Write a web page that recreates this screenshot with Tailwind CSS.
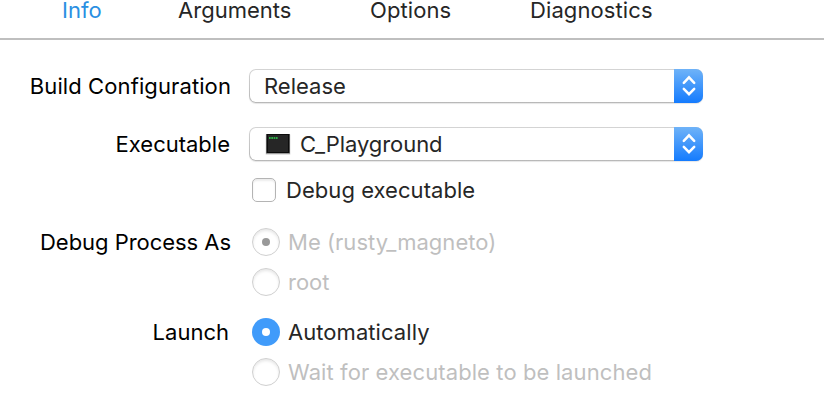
<!DOCTYPE html>
<html lang="en">
<head>
<meta charset="utf-8">
<title>Scheme</title>
<script src="https://cdn.jsdelivr.net/npm/@tailwindcss/browser@4"></script>
</head>
<body class="h-[416px] w-[824px] overflow-hidden bg-white font-['Inter','Liberation_Sans',sans-serif] text-[22px] leading-[20px] whitespace-nowrap text-[#262626]">
<nav class="flex h-10 border-b-2 border-[#bfbfbf] pl-[62px]">
  <a class="w-[116px] text-[#2a8fe2]">Info</a>
  <a class="w-[192px] tracking-[0.02px]">Arguments</a>
  <a class="w-[160px] tracking-[0.1px]">Options</a>
  <a class="tracking-[0.1px]">Diagnostics</a>
</nav>
<main class="grid grid-cols-[231px_1fr] gap-x-[18px] pt-[29px]">
  <div class="flex h-[34px] items-center justify-end text-black"><span class="tracking-[0.1px]">Build Configuration</span></div>
  <div class="flex h-[34px] w-[454px] overflow-hidden rounded-[7px] bg-[linear-gradient(#d4d4d4,#b8b8b8)] p-px shadow-[0_1px_1px_#0000001a]">
    <div class="flex flex-1 items-center rounded-l-[6px] bg-white pl-[14px]"><span>Release</span></div>
    <div class="-my-px -mr-px flex w-[29px] items-center justify-center bg-[linear-gradient(#6fb3f8,#147bfe)]">
      <svg class="h-[22px] w-[14px]" viewBox="0 0 14 22" fill="none" stroke="white" stroke-width="2.5" stroke-linecap="round"><path d="M1.8 7.8 7 2.4 12.2 7.8M1.8 13.8 7 19.2 12.2 13.8"/></svg>
    </div>
  </div>
  <div class="mt-6 flex h-[34px] items-center justify-end pr-px text-black"><span>Executable</span></div>
  <div class="mt-6 flex h-[34px] w-[454px] overflow-hidden rounded-[7px] bg-[linear-gradient(#d4d4d4,#b8b8b8)] p-px shadow-[0_1px_1px_#0000001a]">
    <div class="flex flex-1 items-center rounded-l-[6px] bg-white pl-[15px]">
      <svg class="mr-[9px] h-[22px] w-[26px]" viewBox="0 0 26 22"><rect x="0.5" y="1" width="25" height="21" rx="1" fill="#e2e2e2"/><rect x="1" y="1" width="24" height="20" fill="#9a9a9a"/><rect x="1.5" y="1" width="23" height="19" fill="#0c0c0c"/><rect x="3" y="2" width="20" height="17" fill="#262626"/><path d="M4 5h9" stroke="#2fae48" stroke-width="2" stroke-dasharray="1.7 .6"/></svg>
      <span class="tracking-[-0.08px]">C_Playground</span>
    </div>
    <div class="-my-px -mr-px flex w-[29px] items-center justify-center bg-[linear-gradient(#6fb3f8,#147bfe)]">
      <svg class="h-[22px] w-[14px]" viewBox="0 0 14 22" fill="none" stroke="white" stroke-width="2.5" stroke-linecap="round"><path d="M1.8 7.8 7 2.4 12.2 7.8M1.8 13.8 7 19.2 12.2 13.8"/></svg>
    </div>
  </div>
  <div class="col-start-2 mt-[15px] flex h-7 items-center pl-[3px]">
    <i class="mr-[10px] h-6 w-6 rounded-[5px] border border-[#b4b4b4] bg-white shadow-[inset_0_2px_2px_#00000014]"></i><span class="tracking-[0.05px]">Debug executable</span>
  </div>
  <div class="mt-6 flex h-7 items-center justify-end text-black"><span class="tracking-[-0.04px]">Debug Process As</span></div>
  <div class="mt-6 flex h-7 items-center pl-[3px] text-[#bfbfbf]">
    <i class="mr-[8px] flex h-7 w-7 items-center justify-center rounded-full border border-[#d0d0d0] bg-white shadow-[inset_0_2px_3px_#00000018]"><b class="h-2 w-2 rounded-full bg-[#999]"></b></i><span class="tracking-[0.03px]">Me (rusty_magneto)</span>
  </div>
  <div class="col-start-2 mt-3 flex h-7 items-center pl-[3px] text-[#bfbfbf]">
    <i class="mr-[8px] h-7 w-7 rounded-full border border-[#d0d0d0] bg-white shadow-[inset_0_2px_3px_#00000018]"></i><span>root</span>
  </div>
  <div class="mt-[22px] flex h-7 items-center justify-end pr-[2px] text-black"><span>Launch</span></div>
  <div class="mt-[22px] flex h-7 items-center pl-[3px]">
    <i class="mr-[8px] flex h-7 w-7 items-center justify-center rounded-full bg-[#409bfa]"><b class="h-2 w-2 rounded-full bg-white"></b></i><span class="tracking-[0.06px]">Automatically</span>
  </div>
  <div class="col-start-2 mt-3 flex h-7 items-center pl-[3px] text-[#bfbfbf]">
    <i class="mr-[8px] h-7 w-7 rounded-full border border-[#d0d0d0] bg-white shadow-[inset_0_2px_3px_#00000018]"></i><span class="tracking-[0.09px]">Wait for executable to be launched</span>
  </div>
</main>
</body>
</html>
